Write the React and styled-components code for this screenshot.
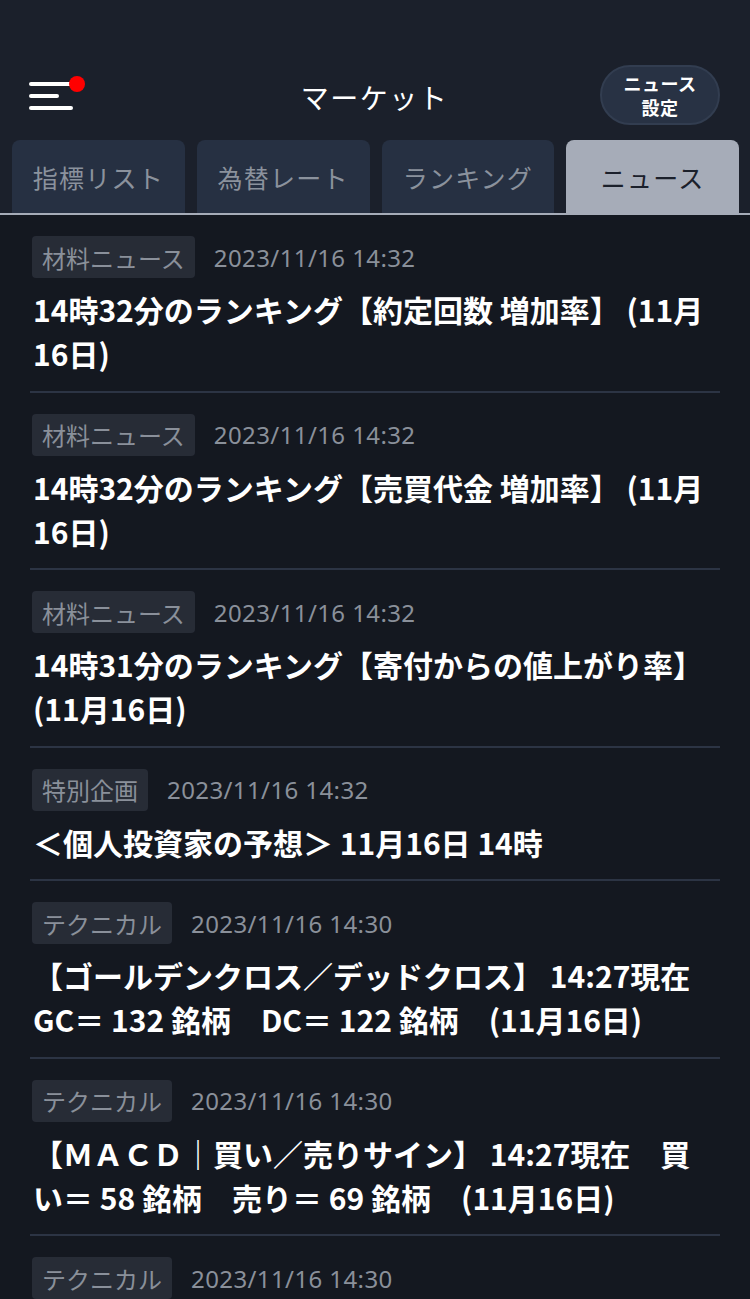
import React from "react";
import styled, { createGlobalStyle } from "styled-components";

const Global = createGlobalStyle`
  html, body { margin: 0; padding: 0; background: #141820; }
  body { font-family: "Noto Sans CJK JP", "Noto Sans", sans-serif; }
  * { box-sizing: border-box; }
`;

const Page = styled.div`
  width: 750px;
  height: 1299px;
  background: #141820;
  overflow: hidden;
`;

const Top = styled.header`
  background: #1b202b;
  padding-top: 60px;
`;

const HeaderRow = styled.div`
  height: 74px;
  display: grid;
  grid-template-columns: 1fr auto 1fr;
  align-items: center;
  padding: 0 30px 0 29px;
`;

const MenuButton = styled.div`
  position: relative;
  width: 50px;
  height: 28px;
  display: flex;
  flex-direction: column;
  justify-content: space-between;
  margin-top: -2px;
`;

const MenuLine = styled.span`
  display: block;
  height: 4px;
  border-radius: 2px;
  background: #ffffff;
  width: ${(p) => p.$w}px;
`;

const Dot = styled.span`
  position: absolute;
  left: 40px;
  top: -6px;
  width: 16px;
  height: 16px;
  border-radius: 50%;
  background: #ff0000;
`;

const Title = styled.h1`
  margin: 0;
  font-size: 28px;
  font-weight: 400;
  color: #ffffff;
  letter-spacing: 1.5px;
`;

const SettingsButton = styled.div`
  justify-self: end;
  width: 120px;
  height: 60px;
  border-radius: 30px;
  background: #283244;
  border: 2px solid #323d50;
  color: #ffffff;
  font-size: 18px;
  font-weight: 700;
  line-height: 24px;
  letter-spacing: 0.5px;
  text-align: center;
  display: flex;
  flex-direction: column;
  align-items: center;
  justify-content: center;
  margin-top: -5px;
`;

const Tabs = styled.nav`
  display: grid;
  grid-template-columns: repeat(4, 1fr);
  gap: 12px;
  padding: 6px 11px 0 12px;
  border-bottom: 2px solid #a6acb8;
`;

const Tab = styled.div`
  height: 73px;
  border-radius: 8px 8px 0 0;
  background: ${(p) => (p.$active ? "#a6acb8" : "#263042")};
  color: ${(p) => (p.$active ? "#1b202b" : "#8b929d")};
  font-size: 25px;
  letter-spacing: 1.2px;
  display: flex;
  align-items: center;
  justify-content: center;
`;

const List = styled.main`
  padding: 0 30px;
`;

const Item = styled.article`
  padding: 21px 0 15.5px;
  border-bottom: 2px solid #2c3444;
`;

const Meta = styled.div`
  display: flex;
  align-items: center;
  gap: 19px;
  padding-left: 2px;
`;

const Tag = styled.span`
  height: 42px;
  padding: 0 10px;
  border-radius: 4px;
  background: #272c36;
  color: #8a909a;
  font-size: 24px;
  display: flex;
  align-items: center;
`;

const DateText = styled.span`
  color: #8a909a;
  font-size: 24px;
  letter-spacing: 0.4px;
  font-family: "Noto Sans", "Noto Sans CJK JP", sans-serif;
`;

const Headline = styled.h2`
  margin: 9px 0 0;
  padding-left: 3px;
  color: #ffffff;
  font-size: 30px;
  font-weight: 700;
  line-height: 44px;
`;

const news = [
  { tag: "材料ニュース", date: "2023/11/16 14:32", title: "14時32分のランキング【約定回数 増加率】 (11月16日)" },
  { tag: "材料ニュース", date: "2023/11/16 14:32", title: "14時32分のランキング【売買代金 増加率】 (11月16日)" },
  { tag: "材料ニュース", date: "2023/11/16 14:32", title: "14時31分のランキング【寄付からの値上がり率】 (11月16日)" },
  { tag: "特別企画", date: "2023/11/16 14:32", title: "＜個人投資家の予想＞ 11月16日 14時" },
  { tag: "テクニカル", date: "2023/11/16 14:30", title: "【ゴールデンクロス／デッドクロス】 14:27現在　GC＝ 132 銘柄　DC＝ 122 銘柄　(11月16日)" },
  { tag: "テクニカル", date: "2023/11/16 14:30", title: "【ＭＡＣＤ｜買い／売りサイン】 14:27現在　買い＝ 58 銘柄　売り＝ 69 銘柄　(11月16日)" },
  { tag: "テクニカル", date: "2023/11/16 14:30", title: "【ＲＳＩ｜買い／売りサイン】 14:27現在" },
];

const tabs = ["指標リスト", "為替レート", "ランキング", "ニュース"];

export default function App() {
  return (
    <Page>
      <Global />
      <Top>
        <HeaderRow>
          <MenuButton>
            <MenuLine $w={44} />
            <MenuLine $w={30} />
            <MenuLine $w={44} />
            <Dot />
          </MenuButton>
          <Title>マーケット</Title>
          <SettingsButton>
            <span>ニュース</span>
            <span>設定</span>
          </SettingsButton>
        </HeaderRow>
        <Tabs>
          {tabs.map((t) => (
            <Tab key={t} $active={t === "ニュース"}>
              {t}
            </Tab>
          ))}
        </Tabs>
      </Top>
      <List>
        {news.map((n, i) => (
          <Item key={i}>
            <Meta>
              <Tag>{n.tag}</Tag>
              <DateText>{n.date}</DateText>
            </Meta>
            <Headline>{n.title}</Headline>
          </Item>
        ))}
      </List>
    </Page>
  );
}
